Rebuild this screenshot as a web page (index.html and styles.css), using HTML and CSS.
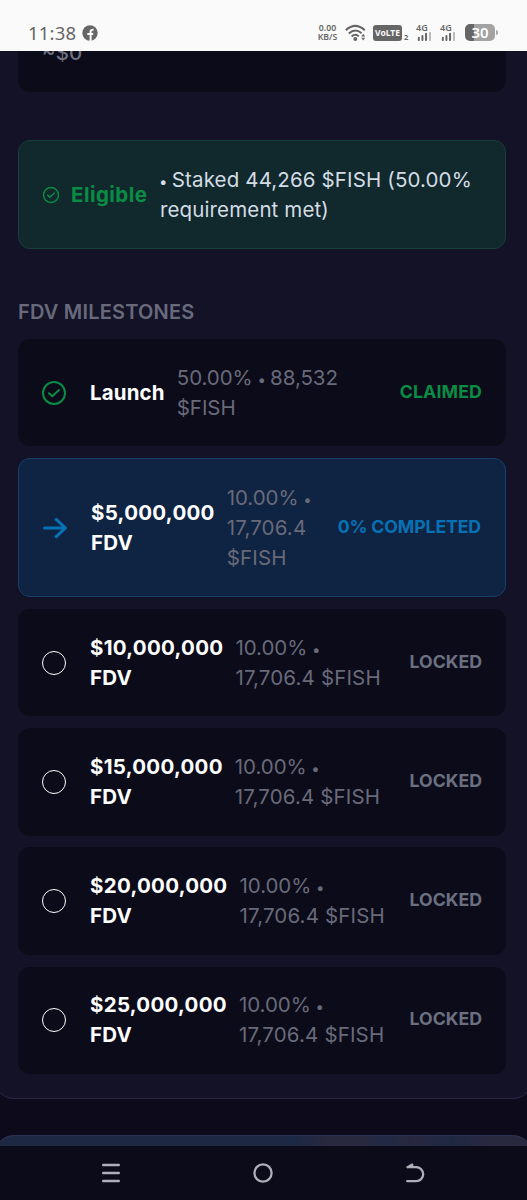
FILE: index.html
```html
<!DOCTYPE html>
<html lang="en">
<head>
    <meta charset="UTF-8">
    <meta name="viewport" content="width=device-width, initial-scale=1.0">
    <title>FDV Milestones</title>
    <link rel="stylesheet" href="styles.css">
</head>
<body>

<header class="status-bar">
    <span class="time">11:38</span>
    <svg class="fb-icon" width="16" height="16" viewBox="0 0 16 16">
        <circle cx="8" cy="8" r="7.7" fill="#666"/>
        <path d="M8.6 16V9.3M8.6 9.8V6.7Q8.6 4.5 11.6 4.8M5.3 8.9H11.2" fill="none" stroke="#fafafa" stroke-width="2"/>
    </svg>
    <span class="speed">0.00<br>KB/S</span>
    <svg class="wifi" width="21" height="18" viewBox="0 0 21 18">
        <g fill="none" stroke="#666" stroke-width="2">
            <path d="M.8 6.2Q10.3-2.4 19.8 6.2"/>
            <path d="M3.8 9.4Q10.3 3.6 16.6 9.2"/>
            <path d="M6.6 12.4Q10.3 9.3 13.8 12.2"/>
        </g>
        <circle cx="10.3" cy="15" r="2" fill="#666"/>
        <path d="M16.2 12.4l2-2.6 2 2.6zM16.2 13.8l2 2.6 2-2.6z" fill="#666"/>
    </svg>
    <span class="volte">VoLTE</span>
    <span class="sim">2</span>
    <div class="signal signal-1">
        <span>4G</span>
        <svg width="17" height="10" viewBox="0 0 17 10">
            <path d="M2.2 6.3V9M6.2 4.3V9M10.2 2V9" stroke="#666" stroke-width="2.2" stroke-linecap="round"/>
            <path d="M14.6 1V9" stroke="#bbb" stroke-width="2.2" stroke-linecap="round"/>
        </svg>
    </div>
    <div class="signal signal-2">
        <span>4G</span>
        <svg width="17" height="10" viewBox="0 0 17 10">
            <path d="M2.2 6.3V9M6.2 4.3V9M10.2 2V9" stroke="#666" stroke-width="2.2" stroke-linecap="round"/>
            <path d="M14.6 1V9" stroke="#bbb" stroke-width="2.2" stroke-linecap="round"/>
        </svg>
    </div>
    <span class="battery">30</span>
    <span class="battery-tip"></span>
</header>

<main class="page">
    <section class="panel">
        <div class="card value-card">
            <span>~$0</span>
        </div>

        <div class="eligible">
            <svg width="18" height="18" viewBox="0 0 24 24" fill="none" stroke="#098d44" stroke-width="1.9" stroke-linecap="round" stroke-linejoin="round">
                <circle cx="12" cy="12" r="10"/>
                <path d="M7.5 12l3 3 6-5.7"/>
            </svg>
            <strong>Eligible</strong>
            <p><span class="dot">•</span> Staked 44,266 $FISH (50.00%<br>requirement met)</p>
        </div>

        <h2>FDV MILESTONES</h2>

        <div class="milestones">
            <div class="card">
                <svg class="icon" viewBox="0 0 24 24" fill="none" stroke="#098d44" stroke-width="2" stroke-linecap="round" stroke-linejoin="round">
                    <circle cx="12" cy="12" r="11"/>
                    <path d="M7 12.3l3.2 3L17 9"/>
                </svg>
                <span class="name launch">Launch</span>
                <span class="detail">50.00% <span class="dot">•</span> 88,532<br>$FISH</span>
                <span class="state claimed">CLAIMED</span>
            </div>

            <div class="card active">
                <svg class="icon" viewBox="0 0 24 24" fill="none" stroke="#0672b5" stroke-width="3.1" stroke-linecap="round" stroke-linejoin="round">
                    <path d="M1.6 12H22.4M13.3 3.3L22.4 12 13.3 20.7"/>
                </svg>
                <span class="name">$5,000,000<br>FDV</span>
                <span class="detail">10.00% <span class="dot">•</span><br><span class="amount">17,706.4<br>$FISH</span></span>
                <span class="state completed">0% COMPLETED</span>
            </div>

            <div class="card">
                <span class="icon circle"></span>
                <span class="name">$10,000,000<br>FDV</span>
                <span class="detail">10.00% <span class="dot">•</span><br><span class="amount">17,706.4 $FISH</span></span>
                <span class="state">LOCKED</span>
            </div>

            <div class="card">
                <span class="icon circle"></span>
                <span class="name">$15,000,000<br>FDV</span>
                <span class="detail">10.00% <span class="dot">•</span><br><span class="amount">17,706.4 $FISH</span></span>
                <span class="state">LOCKED</span>
            </div>

            <div class="card">
                <span class="icon circle"></span>
                <span class="name">$20,000,000<br>FDV</span>
                <span class="detail">10.00% <span class="dot">•</span><br><span class="amount">17,706.4 $FISH</span></span>
                <span class="state">LOCKED</span>
            </div>

            <div class="card">
                <span class="icon circle"></span>
                <span class="name">$25,000,000<br>FDV</span>
                <span class="detail">10.00% <span class="dot">•</span><br><span class="amount">17,706.4 $FISH</span></span>
                <span class="state">LOCKED</span>
            </div>
        </div>
    </section>

    <section class="next-panel"></section>
</main>

<nav class="nav-bar">
    <svg width="20" height="20" viewBox="0 0 20 20" fill="none" stroke="#b0afb9" stroke-width="2.6" stroke-linecap="round">
        <path d="M2.3 2H17.7M2.3 10H17.7M2.3 18H17.7"/>
    </svg>
    <svg width="20" height="20" viewBox="0 0 20 20" fill="none" stroke="#b0afb9" stroke-width="2.3">
        <circle cx="10" cy="10" r="8.6"/>
    </svg>
    <svg width="20" height="20" viewBox="0 0 20 20" fill="none" stroke="#b0afb9" stroke-width="2.3" stroke-linecap="round" stroke-linejoin="round">
        <path d="M2.5 4.2H11.2A7 7 0 0 1 11.2 18.2H2.2M2.5 4.2L7.2 1.6V4.2"/>
    </svg>
</nav>

</body>
</html>
```

FILE: styles.css
```css
* {
    box-sizing: border-box;
}
body {
    margin: 0;
    height: 1200px;
    overflow: hidden;
    display: flex;
    flex-direction: column;
    font-family: Inter, "Liberation Sans", sans-serif;
    background-color: #0d0b1b;
    color: white;
}

/* Status bar */
.status-bar {
    height: 51px;
    flex-shrink: 0;
    display: flex;
    align-items: center;
    padding: 14px 29px 0 28px;
    background-color: #fafafa;
    color: #666;
    font-family: "Noto Sans", sans-serif;
    white-space: nowrap;
}
.time {
    width: 54px;
    font-size: 18.5px;
    letter-spacing: 0.2px;
}
.speed {
    margin-left: auto;
    width: 27px;
    font-size: 8.7px;
    line-height: 9px;
    font-weight: 600;
    text-align: center;
}
.speed, .sim, .signal {
    flex-shrink: 0;
}
.wifi {
    margin-left: 4px;
}
.volte {
    width: 29px;
    height: 16px;
    margin-left: 7px;
    border-radius: 3px;
    background-color: #666;
    color: #fafafa;
    font-size: 8.5px;
    line-height: 16px;
    font-weight: 700;
    text-align: center;
}
.sim {
    width: 7px;
    padding: 8px 0 0 2px;
    font-size: 7.5px;
    font-weight: 700;
}
.signal {
    width: 17px;
    height: 17px;
    margin-left: 7px;
    display: flex;
    flex-direction: column;
    font-size: 9px;
    line-height: 8px;
    font-weight: 600;
}
.battery {
    width: 30px;
    height: 17px;
    margin-left: 8px;
    border-radius: 5px;
    background: linear-gradient(90deg, #666 30%, #a3a3a3 30%);
    color: white;
    font-size: 15px;
    line-height: 17px;
    font-weight: 600;
    text-align: center;
}
.battery-tip {
    width: 2px;
    height: 5px;
    margin-left: 1px;
    background-color: #aaa;
    border-radius: 0 2px 2px 0;
}

/* Main panel */
.page {
    height: 1095px;
    flex-shrink: 0;
    overflow: hidden;
    padding: 0;
}
.panel {
    height: 1048px;
    margin: 0 -6px;
    padding: 0 26px 0 23px;
    background-color: #131227;
    border: 1px solid #292442;
    border-top: none;
    border-radius: 0 0 20px 20px;
}
.card {
    display: flex;
    align-items: center;
    height: 107.3px;
    padding: 0 24px;
    border-radius: 12px;
    background-color: #0c0b1a;
    font-size: 20.5px;
    line-height: 30px;
    white-space: nowrap;
}
.value-card {
    height: 41px;
    align-items: flex-start;
    border-radius: 0 0 12px 12px;
    color: #6d7181;
    font-weight: 500;
    overflow: hidden;
}
.value-card span {
    margin-top: -13px;
}
.eligible {
    display: flex;
    align-items: center;
    height: 109px;
    margin-top: 48px;
    padding: 0 23px;
    border: 1px solid #164039;
    border-radius: 12px;
    background-color: #11282d;
    font-size: 20.5px;
    line-height: 30px;
    white-space: nowrap;
}
.eligible strong {
    margin-left: 11px;
    width: 89px;
    color: #098d44;
    font-weight: 700;
    letter-spacing: 0.45px;
}
.eligible p {
    margin: 0;
    color: #d3dce4;
    letter-spacing: 0.13px;
}
.dot {
    font-size: 15px;
    line-height: 1;
    letter-spacing: -1.5px;
    margin-left: -1px;
}
h2 {
    margin: 48px 0 12px;
    font-size: 20px;
    line-height: 30px;
    font-weight: 600;
    letter-spacing: 0.2px;
    color: #686a7c;
}

/* Milestone rows */
.milestones {
    display: flex;
    flex-direction: column;
    gap: 11.9px;
}
.active {
    height: 139px;
    padding: 0 24px;
    border: 1px solid #17406b;
    background-color: #0f2342;
}
.icon {
    width: 24px;
    height: 24px;
    flex-shrink: 0;
    margin-right: 24px;
}
.circle {
    border: 1.5px solid white;
    border-radius: 50%;
}
.name {
    margin-right: 12px;
    font-weight: 700;
    letter-spacing: 0.28px;
}
.launch {
    letter-spacing: 0.15px;
}
.detail {
    color: #686a79;
    letter-spacing: -0.05px;
}
.amount {
    letter-spacing: 0.15px;
}
.state {
    margin-left: auto;
    padding-bottom: 2px;
    font-size: 17.7px;
    font-weight: 700;
    color: #6b7080;
}
.claimed {
    color: #098d44;
    letter-spacing: 0.15px;
}
.completed {
    color: #0672b5;
    letter-spacing: -0.12px;
}

.next-panel {
    height: 60px;
    margin: 36px -6px 0;
    border: 1px solid #2c3350;
    border-radius: 20px;
    background: linear-gradient(90deg, #1c2844 55%, #28283f 62%, #28283f 69%, #212943 72%, #28283f 78%, #1f2843 85%, #28283f 92%);
}

/* Bottom navigation */
.nav-bar {
    height: 54px;
    flex-shrink: 0;
    display: flex;
    align-items: center;
    justify-content: space-between;
    padding: 0 102px 0 101px;
    background-color: #0c0b1a;
}
```
